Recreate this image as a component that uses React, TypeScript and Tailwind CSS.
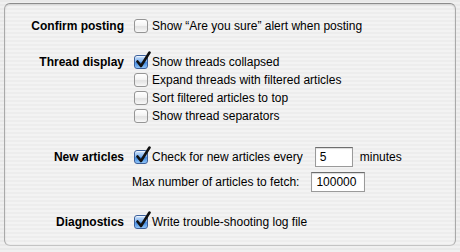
import React from 'react';

function Check({ checked }: { checked?: boolean }) {
  return (
    <span className="relative inline-block w-[14px] h-[14px] shrink-0">
      {checked ? (
        <span className="absolute inset-0 rounded-[3px] border border-[#3b5f9a] bg-[linear-gradient(180deg,#cfe3fb_0%,#7fb2ee_45%,#3d86de_55%,#8fc4f8_100%)] shadow-[inset_0_1px_1px_rgba(255,255,255,0.7)]" />
      ) : (
        <span className="absolute inset-0 rounded-[3px] border border-[#959595] bg-[linear-gradient(180deg,#ffffff_0%,#f4f4f4_45%,#e2e2e2_55%,#f8f8f8_100%)]" />
      )}
      {checked && (
        <svg className="absolute left-[1px] top-[-4px]" width="16" height="18" viewBox="0 0 16 18">
          <path d="M2.5 10.5 L6 15 L14.5 1.5" fill="none" stroke="#111" strokeWidth="2.6" strokeLinecap="round" strokeLinejoin="round" />
        </svg>
      )}
    </span>
  );
}

function Row({ label, checked, children }: { label?: string; checked?: boolean; children: React.ReactNode }) {
  return (
    <div className="flex items-center h-[18px]">
      <div className="w-[119px] text-right font-bold">{label}</div>
      <div className="ml-[10px] flex items-center">
        <Check checked={checked} />
        <span className="ml-[4px] whitespace-nowrap">{children}</span>
      </div>
    </div>
  );
}

function Field({ value, w }: { value: string; w: string }) {
  return (
    <div className={`h-[20px] ${w} bg-white border border-[#9a9a9a] border-t-[#6e6e6e] shadow-[inset_0_1px_1px_rgba(0,0,0,0.15)] px-[4px] flex items-center`}>
      {value}
    </div>
  );
}

export default function App() {
  return (
    <div
      className="w-[460px] h-[252px] pt-[3px] px-[4px] bg-[repeating-linear-gradient(180deg,#e9e9e9_0px,#e9e9e9_2px,#f0f0f0_2px,#f0f0f0_4px)] text-[12px] text-black"
      style={{ fontFamily: '"Liberation Sans", Arial, sans-serif' }}
    >
      <div className="h-[243px] rounded-[6px] border border-[#a9a9a9] border-t-[#8c8c8c] border-b-[#c4c4c4] bg-[repeating-linear-gradient(180deg,#ededed_0px,#ededed_2px,#f3f3f3_2px,#f3f3f3_4px)] shadow-[inset_0_1px_2px_rgba(0,0,0,0.12)] pt-[13px]">
        <Row label="Confirm posting">Show “Are you sure” alert when posting</Row>

        <div className="mt-[18px]">
          <Row label="Thread display" checked>Show threads collapsed</Row>
          <Row>Expand threads with filtered articles</Row>
          <Row>Sort filtered articles to top</Row>
          <Row>Show thread separators</Row>
        </div>

        <div className="mt-[22px] flex items-center h-[20px]">
          <div className="w-[119px] text-right font-bold">New articles</div>
          <div className="ml-[10px] flex items-center">
            <Check checked />
            <span className="ml-[4px] whitespace-nowrap">Check for new articles every</span>
            <div className="ml-[12px]"><Field value="5" w="w-[38px]" /></div>
            <span className="ml-[7px]">minutes</span>
          </div>
        </div>

        <div className="mt-[5px] flex items-center h-[20px]">
          <div className="w-[119px]" />
          <div className="ml-[8px] flex items-center">
            <span className="whitespace-nowrap">Max number of articles to fetch:</span>
            <div className="ml-[12px]"><Field value="100000" w="w-[54px]" /></div>
          </div>
        </div>

        <div className="mt-[21px]">
          <Row label="Diagnostics" checked>Write trouble-shooting log file</Row>
        </div>
      </div>
    </div>
  );
}
